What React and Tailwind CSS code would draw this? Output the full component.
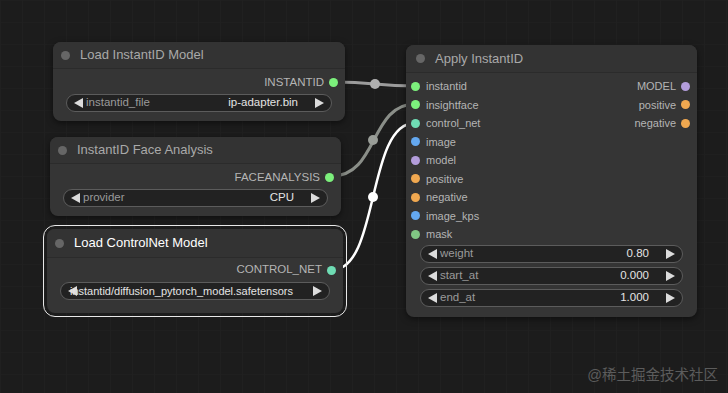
import React from "react";

const FONT = { fontFamily: '"Liberation Sans", Arial, sans-serif' };

const Arrow = ({ dir = "left" }) => (
  <svg width="9" height="10" viewBox="0 0 9 10" className="shrink-0">
    {dir === "left" ? (
      <polygon points="9,0 9,10 0,5" fill="#dcdcdc" />
    ) : (
      <polygon points="0,0 0,10 9,5" fill="#dcdcdc" />
    )}
  </svg>
);

const Dot = ({ color }) => (
  <span className="w-[9px] h-[9px] rounded-full shrink-0" style={{ backgroundColor: color }} />
);

const Combo = ({ label, value, className = "" }) => (
  <div
    className={`h-[18px] rounded-full bg-[#222222] border border-[#5c5c5c] flex items-center px-[7px] text-[11.5px] ${className}`}
  >
    <Arrow dir="left" />
    <span className="ml-[3px] text-[#9a9a9a]">{label}</span>
    <span className="ml-auto mr-[17px] text-[#e4e4e4]">{value}</span>
    <Arrow dir="right" />
  </div>
);

const Title = ({ text, selected }) => (
  <div className="h-[27px] flex items-center pl-[8px] border-b border-[#2b2b2b] bg-[#333333] rounded-t-[8px]">
    <span className="w-[9px] h-[9px] rounded-full bg-[#666666]" />
    <span className={`ml-[10px] text-[13px] ${selected ? "text-white" : "text-[#a9a9a9]"}`}>{text}</span>
  </div>
);

const OutRow = ({ label, color, small }) => (
  <div
    className={`h-[18.5px] flex items-center justify-end pr-[7px] gap-[5px] text-[#b4b4b4] ${small ? "text-[11px]" : "text-[11.5px]"}`}
  >
    <span>{label}</span>
    <Dot color={color} />
  </div>
);

const inputs = [
  ["instantid", "#7cf07c"],
  ["insightface", "#7cf07c"],
  ["control_net", "#6fdcb4"],
  ["image", "#64a8f0"],
  ["model", "#b39ddb"],
  ["positive", "#f0a850"],
  ["negative", "#f0a850"],
  ["image_kps", "#64a8f0"],
  ["mask", "#81c784"],
];

const outputs = [
  ["MODEL", "#b39ddb"],
  ["positive", "#f0a850"],
  ["negative", "#f0a850"],
];

export default function App() {
  return (
    <div
      className="relative w-[728px] h-[393px] overflow-hidden bg-[#1c1c1c] bg-[linear-gradient(to_right,#202020_1px,transparent_1px),linear-gradient(to_bottom,#1f1f1f_1px,transparent_1px)] bg-[size:22px_22px]"
      style={FONT}
    >
      <svg className="absolute inset-0" width="728" height="393">
        <path d="M335,82 C375,82 375,86 415,86" stroke="#9c9c9c" strokeWidth="3" fill="none" />
        <circle cx="375" cy="84" r="5" fill="#b0b0b0" />
        <path d="M332,176 C378,176 370,104 415,104" stroke="#8a8e88" strokeWidth="3" fill="none" />
        <circle cx="373" cy="140" r="5" fill="#9a9e98" />
        <path d="M332,270 C380,270 366,123 415,123" stroke="#ffffff" strokeWidth="2.5" fill="none" />
        <circle cx="373" cy="197" r="5" fill="#ffffff" />
      </svg>

      {/* Load InstantID Model */}
      <div className="absolute left-[53px] top-[42px] w-[292px] h-[79px] rounded-[8px] bg-[#353535] shadow-[0_2px_6px_rgba(0,0,0,0.5)]">
        <Title text="Load InstantID Model" />
        <div className="pt-[4px]">
          <OutRow label="INSTANTID" color="#7cf07c" />
        </div>
        <Combo label="instantid_file" value="ip-adapter.bin" className="mx-[13px] mt-[2px]" />
      </div>

      {/* InstantID Face Analysis */}
      <div className="absolute left-[50px] top-[137px] w-[291px] h-[79px] rounded-[8px] bg-[#353535] shadow-[0_2px_6px_rgba(0,0,0,0.5)]">
        <Title text="InstantID Face Analysis" />
        <div className="pt-[4px]">
          <OutRow label="FACEANALYSIS" color="#7cf07c" />
        </div>
        <Combo label="provider" value="CPU" className="mx-[13px] mt-[2px]" />
      </div>

      {/* Load ControlNet Model (selected) */}
      <div className="absolute left-[43px] top-[225px] w-[304px] h-[92px] rounded-[12px] border-[1.5px] border-[#e8e8e8]" />
      <div className="absolute left-[47px] top-[229px] w-[296px] h-[84px] rounded-[8px] bg-[#353535]">
        <div className="h-[29px] flex items-center pl-[8px] border-b border-[#2b2b2b] bg-[#333333] rounded-t-[8px]">
          <span className="w-[9px] h-[9px] rounded-full bg-[#666666]" />
          <span className="ml-[10px] text-[13px] text-white">Load ControlNet Model</span>
        </div>
        <div className="pt-[3px]">
          <div className="h-[18px] flex items-center justify-end pr-[7px] gap-[5px] text-[11.5px] text-[#b4b4b4]">
            <span>CONTROL_NET</span>
            <Dot color="#6fdcb4" />
          </div>
        </div>
        <div className="relative mx-[13px] mt-[3px] h-[18px] rounded-full bg-[#222222] border border-[#5c5c5c] flex items-center px-[7px] text-[11px]">
          <Arrow dir="left" />
          <span className="absolute left-[9px] text-[#e4e4e4]">instantid/diffusion_pytorch_model.safetensors</span>
          <span className="ml-auto">
            <Arrow dir="right" />
          </span>
        </div>
      </div>

      {/* Apply InstantID */}
      <div className="absolute left-[406px] top-[45px] w-[291px] h-[272px] rounded-[8px] bg-[#353535] shadow-[0_2px_6px_rgba(0,0,0,0.5)]">
        <div className="h-[28px] flex items-center pl-[10px] border-b border-[#2b2b2b] bg-[#333333] rounded-t-[8px]">
          <span className="w-[9px] h-[9px] rounded-full bg-[#666666]" />
          <span className="ml-[10px] text-[13px] text-[#a9a9a9]">Apply InstantID</span>
        </div>
        <div className="relative pt-[4px]">
          {inputs.map(([label, color]) => (
            <div key={label} className="h-[18.5px] flex items-center pl-[5px] gap-[6px] text-[11px] text-[#b4b4b4]">
              <Dot color={color} />
              <span>{label}</span>
            </div>
          ))}
          <div className="absolute top-[4px] right-0">
            {outputs.map(([label, color]) => (
              <OutRow key={label} label={label} color={color} small />
            ))}
          </div>
        </div>
        <div className="mx-[14px] mt-[1px] flex flex-col gap-[4px]">
          <Combo label="weight" value="0.80" />
          <Combo label="start_at" value="0.000" />
          <Combo label="end_at" value="1.000" />
        </div>
      </div>

      <div
        className="absolute right-[10px] bottom-[6px] text-[14.5px] text-[#5c5c5c]"
        style={{ fontFamily: '"Liberation Sans", "Noto Sans CJK SC", sans-serif' }}
      >
        @稀土掘金技术社区
      </div>
    </div>
  );
}
